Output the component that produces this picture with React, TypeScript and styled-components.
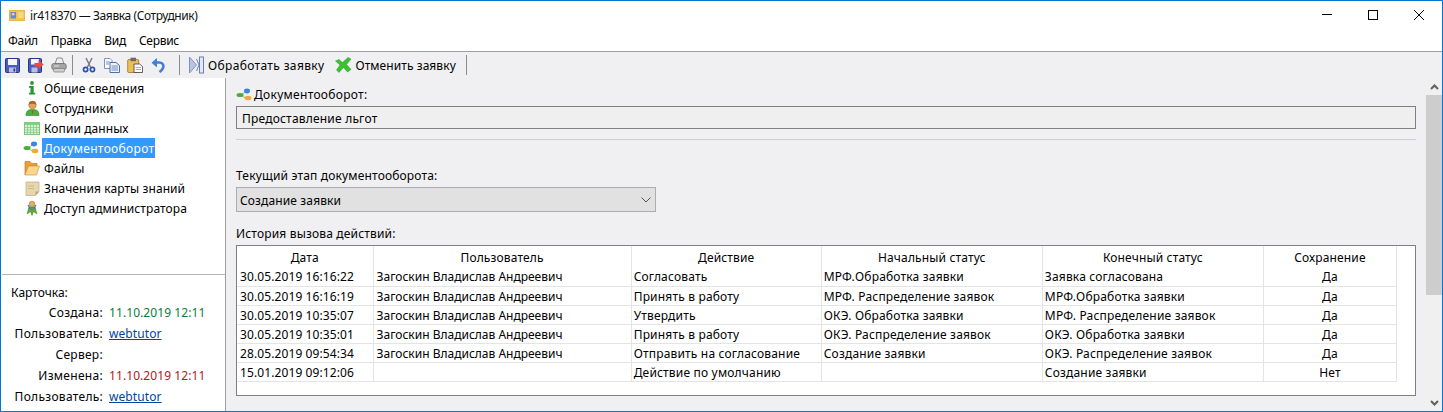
import React from 'react';
import styled, { createGlobalStyle } from 'styled-components';

const GlobalStyle = createGlobalStyle`
  html, body { margin: 0; padding: 0; background: #fff; overflow: hidden; }
  * { box-sizing: border-box; }
`;

const Window = styled.div`
  width: 1443px;
  height: 412px;
  border: 1px solid #0078d7;
  display: flex;
  flex-direction: column;
  font-family: "Noto Sans", "Open Sans", sans-serif;
  font-size: 12px;
  color: #000;
  background: #fff;
  overflow: hidden;
`;

const TitleBar = styled.div`
  height: 29px;
  flex: none;
  display: flex;
  align-items: center;
  padding-left: 8px;
  gap: 5px;
`;

const TitleText = styled.span`
  flex: 1;
  color: #111;
  letter-spacing: -0.4px;
`;

const WinButtons = styled.div`
  display: flex;
`;

const WinButton = styled.div`
  width: 46px;
  height: 29px;
  padding-bottom: 1px;
  display: flex;
  align-items: center;
  justify-content: center;
`;

const MenuBar = styled.div`
  height: 22px;
  flex: none;
  display: flex;
  align-items: center;
  padding-left: 7px;
  gap: 13px;
  border-bottom: 1px solid #a0a0a0;
  letter-spacing: -0.3px;
`;

const ToolBar = styled.div`
  height: 26px;
  flex: none;
  display: flex;
  align-items: center;
  background: #f0f0f2;
`;

const ToolIcon = styled.div<{ $gap?: number }>`
  width: 23px;
  height: 22px;
  margin-left: ${(p) => p.$gap || 0}px;
  display: flex;
  align-items: center;
  justify-content: center;
`;

const ToolSep = styled.div<{ $left: number; $right: number }>`
  width: 1px;
  height: 20px;
  background: #8c8c8c;
  margin: 0 ${(p) => p.$right}px 0 ${(p) => p.$left}px;
`;

const ToolLabel = styled.span<{ $track: number }>`
  letter-spacing: ${(p) => p.$track}px;
  white-space: nowrap;
`;

const Body = styled.div`
  flex: 1;
  display: flex;
  min-height: 0;
`;

const Sidebar = styled.div`
  width: 225px;
  flex: none;
  border-right: 1px solid #a0a0a0;
  display: flex;
  flex-direction: column;
  background: #fff;
`;

const NavList = styled.div`
  height: 196px;
  flex: none;
  padding-left: 21px;
`;

const NavItem = styled.div`
  height: 20px;
  display: flex;
  align-items: center;
`;

const NavIcon = styled.div`
  width: 20px;
  height: 20px;
  flex: none;
  display: flex;
  align-items: center;
  justify-content: center;
`;

const NavText = styled.span<{ $active?: boolean }>`
  height: 20px;
  line-height: 21px;
  padding: 0 1px 0 2px;
  letter-spacing: ${(p) => (p.$active ? 0.33 : 0.08)}px;
  background: ${(p) => (p.$active ? '#3399ff' : 'transparent')};
  color: ${(p) => (p.$active ? '#fff' : '#000')};
`;

const CardInfo = styled.div`
  flex: 1;
  margin: 0 0 0 1px;
  border-top: 1px solid #b4b4b4;
  padding: 7px 0 0 9px;
`;

const CardTitle = styled.div`
  height: 20px;
  line-height: 21px;
`;

const CardGrid = styled.div`
  display: grid;
  grid-template-columns: 92px auto;
  justify-content: start;
  column-gap: 6px;
  grid-auto-rows: 21px;
  line-height: 21px;
`;

const CardLabel = styled.div`
  text-align: right;
  white-space: nowrap;
  letter-spacing: 0.3px;
`;

const CardValue = styled.div<{ $color?: string }>`
  color: ${(p) => p.$color || '#000'};
  letter-spacing: 0.08px;
`;

const UserLink = styled.a`
  color: #0046a0;
  text-decoration: underline;
`;

const Content = styled.div`
  flex: 1;
  display: flex;
  background: #f0f0f2;
  min-width: 0;
`;

const Main = styled.div`
  flex: 1;
  padding: 7px 10px 0 10px;
  min-width: 0;
`;

const FieldLabel = styled.div`
  height: 20px;
  display: flex;
  align-items: center;
  letter-spacing: 0.17px;
`;

const DocLabel = styled(FieldLabel)`
  letter-spacing: 0.3px;
  padding-bottom: 1px;
`;

const ReadonlyBox = styled.div`
  height: 23px;
  margin-top: 1px;
  border: 1px solid #808080;
  background: #efefef;
  padding-left: 5px;
  line-height: 23px;
  letter-spacing: 0.2px;
`;

const Divider = styled.div`
  height: 1px;
  margin-top: 10px;
  background: #c4d0da;
`;

const StageLabel = styled(FieldLabel)`
  margin-top: 25px;
`;

const SelectBox = styled.div`
  width: 420px;
  height: 25px;
  margin-top: 2px;
  border: 1px solid #adadad;
  background: #e1e1e1;
  padding: 1px 4px 0 3px;
  display: flex;
  align-items: center;
  justify-content: space-between;
  letter-spacing: 0.13px;
`;

const HistoryLabel = styled(FieldLabel)`
  margin-top: 11px;
`;

const TableFrame = styled.div`
  height: 151px;
  margin-top: 2px;
  border: 1px solid #808080;
  background: #fff;
`;

const Grid = styled.table`
  border-collapse: collapse;
  table-layout: fixed;
  width: 1160px;
`;

const Head = styled.th`
  height: 21px;
  font-weight: 400;
  text-align: center;
  padding: 1px 0 0;
  letter-spacing: 0.15px;
  border-right: 1px solid #e4e4e4;
`;

const Cell = styled.td<{ $center?: boolean }>`
  height: 19px;
  padding: 2px 0 0 ${(p) => (p.$center ? 0 : 2)}px;
  text-align: ${(p) => (p.$center ? 'center' : 'left')};
  border-right: 1px solid #e4e4e4;
  border-bottom: 1px solid #e4e4e4;
  white-space: nowrap;
  overflow: hidden;
  line-height: 16px;
  letter-spacing: 0.18px;

  &:nth-child(1) {
    padding-left: 3px;
    letter-spacing: 0.1px;
  }
  &:nth-child(2) {
    padding-left: 3px;
    letter-spacing: 0;
  }
`;

const ScrollBar = styled.div`
  width: 16px;
  flex: none;
  display: flex;
  flex-direction: column;
  background: #f0f0f0;
`;

const ScrollArrow = styled.div`
  height: 17px;
  flex: none;
  display: flex;
  align-items: center;
  justify-content: center;
`;

const ScrollThumb = styled.div`
  height: 200px;
  flex: none;
  background: #cdcdcd;
`;

const ScrollTrack = styled.div`
  flex: 1;
`;

const FlowIcon = () => (
  <svg width="18" height="14" viewBox="0 0 18 14">
    <path d="M5 7 L10 3.5 M5 7 L10 10.5" stroke="#9aa8b8" strokeWidth="1" fill="none" />
    <ellipse cx="4" cy="7" rx="3.5" ry="2" fill="#45b035" />
    <ellipse cx="11" cy="3" rx="3" ry="2.4" fill="#3c86d8" />
    <ellipse cx="12" cy="10" rx="3.4" ry="2.2" fill="#eda93c" />
  </svg>
);

const ActionIcon = () => (
  <svg width="15" height="18" viewBox="0 0 15 18">
    <path d="M0.5 1 L7.5 9 L0.5 17 Z" fill="#b9c3e6" stroke="#8090c0" />
    <rect x="10.5" y="1" width="4" height="16" fill="#e4e8f6" stroke="#6d7fb0" />
    <path d="M7.5 3 L10 9 L7.5 15" fill="none" stroke="#6d7fb0" />
  </svg>
);

const CancelIcon = () => (
  <svg width="17" height="16" viewBox="0 0 17 16">
    <path d="M0.5 4 L4 2.5 L7.5 5.5 L13 0.5 L16 2 L11.5 7.5 L16 12.5 L12.5 15 L8.5 10.5 L4 15.5 L1.5 13 L5 8 Z" fill="#3cc034" stroke="#249a20" strokeWidth="0.5" />
  </svg>
);

const SaveIcon = () => (
  <svg width="15" height="15" viewBox="0 0 15 15">
    <rect x="0.5" y="0.5" width="14" height="14" rx="1" fill="#4a5cc0" stroke="#2a3480" />
    <rect x="3" y="1" width="9" height="6" fill="#f4f6ff" />
    <rect x="4" y="9.5" width="7" height="5" fill="#b9bfe0" />
    <rect x="8.5" y="10.5" width="1.6" height="3" fill="#2a3480" />
  </svg>
);

const SaveAsIcon = () => (
  <svg width="16" height="15" viewBox="0 0 16 15">
    <rect x="0.5" y="0.5" width="13" height="14" rx="1" fill="#4a5cc0" stroke="#2a3480" />
    <rect x="3" y="1" width="8" height="5.5" fill="#f4f6ff" />
    <rect x="3.5" y="9.5" width="6" height="5" fill="#b9bfe0" />
    <path d="M6.5 5 H10.5 V2 L15.7 6.5 L10.5 11 V8.5 H6.5 Z" fill="#ec4a3a" />
  </svg>
);

const PrintIcon = () => (
  <svg width="16" height="16" viewBox="0 0 16 16">
    <path d="M4 7 L6 1 H11 L13 7 Z" fill="#ececec" stroke="#777" strokeWidth="0.8" />
    <rect x="0.8" y="6.5" width="14.4" height="6" rx="2" fill="#a4a4a4" stroke="#6e6e6e" strokeWidth="0.8" />
    <rect x="2.5" y="11.5" width="11" height="3.5" rx="1.2" fill="#cfcfcf" stroke="#767676" strokeWidth="0.7" />
    <path d="M3 9 H8" stroke="#e4e4e4" />
  </svg>
);

const CutIcon = () => (
  <svg width="14" height="16" viewBox="0 0 14 16">
    <path d="M4 1 L8.5 10 M10 1 L5.5 10" stroke="#7b7b84" strokeWidth="1.5" fill="none" />
    <circle cx="3.6" cy="12.5" r="2.1" fill="none" stroke="#2d4fb0" strokeWidth="1.7" />
    <circle cx="10.4" cy="12.5" r="2.1" fill="none" stroke="#2d4fb0" strokeWidth="1.7" />
  </svg>
);

const CopyIcon = () => (
  <svg width="16" height="15" viewBox="0 0 16 15">
    <path d="M0.5 0.5 H6 L8 2.5 V10.5 H0.5 Z" fill="#fff" stroke="#7c93c4" />
    <path d="M6 4.5 H12 L15.5 7.5 V14.5 H6 Z" fill="#eef3fc" stroke="#4f6cab" />
    <path d="M7.5 8 H14 M7.5 10 H14 M7.5 12 H14 M2 4 H6 M2 6 H5" stroke="#5f7fc0" strokeWidth="0.9" />
  </svg>
);

const PasteIcon = () => (
  <svg width="16" height="16" viewBox="0 0 16 16">
    <rect x="0.7" y="2.5" width="11" height="13" rx="1" fill="#eebf55" stroke="#9a7226" strokeWidth="0.8" />
    <rect x="3.5" y="0.7" width="5.5" height="3.5" fill="#6a6a6a" />
    <path d="M7 7 H12.5 L15.5 9.5 V15.5 H7 Z" fill="#fff" stroke="#3c3c3c" strokeWidth="0.8" />
    <path d="M8.5 10.5 H14 M8.5 12.5 H14" stroke="#888" strokeWidth="0.7" />
  </svg>
);

const UndoIcon = () => (
  <svg width="14" height="15" viewBox="0 0 14 15">
    <path d="M4 4.5 H8.5 C12 4.5 13 7.5 12 10 C11.4 11.6 10 13 8.5 14" fill="none" stroke="#3f7fd6" strokeWidth="2.6" />
    <path d="M6 0 V9.5 L0.5 4.7 Z" fill="#3f7fd6" />
  </svg>
);

const InfoIcon = () => (
  <svg width="8" height="14" viewBox="0 0 8 14">
    <circle cx="4" cy="2" r="1.9" fill="#27962f" />
    <path d="M1 5 H5.7 V11.8 H7.2 V13.6 H1 V11.8 H2.5 V6.8 H1 Z" fill="#27962f" />
  </svg>
);

const PersonIcon = () => (
  <svg width="15" height="16" viewBox="0 0 15 16">
    <path d="M1 15.5 C1 11 3 9.5 7.5 9.5 C12 9.5 14 11 14 15.5 Z" fill="#4caf3c" stroke="#2c8a25" strokeWidth="0.6" />
    <circle cx="7.5" cy="5" r="3.8" fill="#e0a45c" stroke="#b5742c" strokeWidth="0.6" />
    <path d="M3.8 4.5 C4 1.5 6 1 7.5 1 C9.5 1 11 2 11.2 4.5 C9 3.5 6 3.5 3.8 4.5 Z" fill="#a66a26" />
    <path d="M7.5 10 L6.8 11 L7.5 14.5 L8.2 11 Z" fill="#d8342c" />
  </svg>
);

const TableIcon = () => (
  <svg width="16" height="13" viewBox="0 0 16 13">
    <rect x="0.5" y="0.5" width="15" height="12" fill="#d8f2d4" stroke="#7cc87c" />
    <rect x="0.5" y="0.5" width="15" height="2.5" fill="#7fd07f" />
    <path d="M3.5 3 V13 M6.5 3 V13 M9.5 3 V13 M12.5 3 V13 M1 5.5 H15 M1 8 H15 M1 10.5 H15" stroke="#7cc87c" strokeWidth="0.7" />
  </svg>
);

const FolderIcon = () => (
  <svg width="16" height="16" viewBox="0 0 16 16">
    <path d="M1 15 V1.5 H6 L7.5 3.5 H13 V6 H4.5 Z" fill="#ea9f32" stroke="#c07c1c" strokeWidth="0.7" />
    <path d="M1 15 L4.5 6 H15.5 L12.5 15 Z" fill="#fbd690" stroke="#da9a34" strokeWidth="0.7" />
  </svg>
);

const NoteIcon = () => (
  <svg width="15" height="15" viewBox="0 0 15 15">
    <path d="M1 1 H14 V10.5 L10.5 14.5 H1 Z" fill="#e6d6ae" stroke="#c4b48a" strokeWidth="0.8" />
    <path d="M10.5 14.5 V10.5 H14 Z" fill="#b9a678" />
    <path d="M3 5 H9 M3 7.5 H9" stroke="#c6b27e" strokeWidth="0.8" />
  </svg>
);

const AdminIcon = () => (
  <svg width="14" height="16" viewBox="0 0 14 16">
    <path d="M2 14 L4 7 H10 L12 14 L8.5 11.5 L7 15.5 L5.5 11.5 Z" fill="#4caf3c" stroke="#2c8a25" strokeWidth="0.5" />
    <circle cx="7" cy="4" r="2.8" fill="#e2b060" stroke="#a9752c" strokeWidth="0.6" />
    <path d="M3 5 L6 10 M11 5 L8 10" stroke="#3d6fc4" strokeWidth="1.2" />
    <path d="M5 9 L7 12 L9 9" fill="none" stroke="#d8742c" strokeWidth="1" />
  </svg>
);

const CardGlyph = () => (
  <svg width="16" height="11" viewBox="0 0 16 11">
    <rect x="0" y="0" width="16" height="11" rx="1" fill="#f6c24e" stroke="#dc9e25" strokeWidth="0.6" />
    <rect x="1.5" y="2" width="5.5" height="6.5" fill="#5f8ed0" />
    <circle cx="4.2" cy="4.2" r="1.4" fill="#f0c9a0" />
    <path d="M9 3 H14.5 M9 5 H14.5 M9 7 H14.5" stroke="#fbe9b8" strokeWidth="1" />
  </svg>
);

const Chevron = ({ up }: { up?: boolean }) => (
  <svg width="9" height="6" viewBox="0 0 9 6">
    <path d={up ? 'M1 5 L4.5 1.5 L8 5' : 'M1 1 L4.5 4.5 L8 1'} fill="none" stroke="#606060" strokeWidth="2" />
  </svg>
);

const navItems: { label: string; icon: React.ReactNode; active?: boolean }[] = [
  { label: 'Общие сведения', icon: <InfoIcon /> },
  { label: 'Сотрудники', icon: <PersonIcon /> },
  { label: 'Копии данных', icon: <TableIcon /> },
  { label: 'Документооборот', icon: <FlowIcon />, active: true },
  { label: 'Файлы', icon: <FolderIcon /> },
  { label: 'Значения карты знаний', icon: <NoteIcon /> },
  { label: 'Доступ администратора', icon: <AdminIcon /> },
];

const user = 'Загоскин Владислав Андреевич';

const rows = [
  ['30.05.2019 16:16:22', user, 'Согласовать', 'МРФ.Обработка заявки', 'Заявка согласована', 'Да'],
  ['30.05.2019 16:16:19', user, 'Принять в работу', 'МРФ. Распределение заявок', 'МРФ.Обработка заявки', 'Да'],
  ['30.05.2019 10:35:07', user, 'Утвердить', 'ОКЭ. Обработка заявки', 'МРФ. Распределение заявок', 'Да'],
  ['30.05.2019 10:35:01', user, 'Принять в работу', 'ОКЭ. Распределение заявок', 'ОКЭ. Обработка заявки', 'Да'],
  ['28.05.2019 09:54:34', user, 'Отправить на согласование', 'Создание заявки', 'ОКЭ. Распределение заявок', 'Да'],
  ['15.01.2019 09:12:06', '', 'Действие по умолчанию', '', 'Создание заявки', 'Нет'],
];

const columns = [
  { title: 'Дата', width: 136 },
  { title: 'Пользователь', width: 258 },
  { title: 'Действие', width: 190 },
  { title: 'Начальный статус', width: 221 },
  { title: 'Конечный статус', width: 221 },
  { title: 'Сохранение', width: 133 },
];

export default function App() {
  return (
    <>
      <GlobalStyle />
      <Window>
        <TitleBar>
          <CardGlyph />
          <TitleText>ir418370 — Заявка (Сотрудник)</TitleText>
          <WinButtons>
            <WinButton>
              <svg width="10" height="10" viewBox="0 0 10 10"><path d="M0 4.5 H10" stroke="#000" /></svg>
            </WinButton>
            <WinButton>
              <svg width="10" height="10" viewBox="0 0 10 10"><rect x="0.5" y="0.5" width="9" height="9" fill="none" stroke="#000" /></svg>
            </WinButton>
            <WinButton>
              <svg width="10" height="10" viewBox="0 0 10 10"><path d="M0 0 L10 10 M10 0 L0 10" stroke="#000" /></svg>
            </WinButton>
          </WinButtons>
        </TitleBar>
        <MenuBar>
          <span>Файл</span>
          <span>Правка</span>
          <span>Вид</span>
          <span>Сервис</span>
        </MenuBar>
        <ToolBar>
          <ToolIcon><SaveIcon /></ToolIcon>
          <ToolIcon><SaveAsIcon /></ToolIcon>
          <ToolIcon><PrintIcon /></ToolIcon>
          <ToolSep $left={2} $right={4} />
          <ToolIcon><CutIcon /></ToolIcon>
          <ToolIcon><CopyIcon /></ToolIcon>
          <ToolIcon><PasteIcon /></ToolIcon>
          <ToolIcon><UndoIcon /></ToolIcon>
          <ToolSep $left={10} $right={5} />
          <ToolIcon><ActionIcon /></ToolIcon>
          <ToolLabel $track={0.35}>Обработать заявку</ToolLabel>
          <ToolIcon $gap={8}><CancelIcon /></ToolIcon>
          <ToolLabel $track={0.07}>Отменить заявку</ToolLabel>
          <ToolSep $left={10} $right={0} />
        </ToolBar>
        <Body>
          <Sidebar>
            <NavList>
              {navItems.map((item) => (
                <NavItem key={item.label}>
                  <NavIcon>{item.icon}</NavIcon>
                  <NavText $active={item.active}>{item.label}</NavText>
                </NavItem>
              ))}
            </NavList>
            <CardInfo>
              <CardTitle>Карточка:</CardTitle>
              <CardGrid>
                <CardLabel>Создана:</CardLabel>
                <CardValue $color="#0a7d3c">11.10.2019 12:11</CardValue>
                <CardLabel>Пользователь:</CardLabel>
                <CardValue><UserLink>webtutor</UserLink></CardValue>
                <CardLabel>Сервер:</CardLabel>
                <CardValue />
                <CardLabel>Изменена:</CardLabel>
                <CardValue $color="#b02020">11.10.2019 12:11</CardValue>
                <CardLabel>Пользователь:</CardLabel>
                <CardValue><UserLink>webtutor</UserLink></CardValue>
              </CardGrid>
            </CardInfo>
          </Sidebar>
          <Content>
            <Main>
              <DocLabel><FlowIcon />Документооборот:</DocLabel>
              <ReadonlyBox>Предоставление льгот</ReadonlyBox>
              <Divider />
              <StageLabel>Текущий этап документооборота:</StageLabel>
              <SelectBox>
                Создание заявки
                <svg width="10" height="6" viewBox="0 0 10 6"><path d="M0.5 0.5 L5 5 L9.5 0.5" fill="none" stroke="#555" /></svg>
              </SelectBox>
              <HistoryLabel>История вызова действий:</HistoryLabel>
              <TableFrame>
                <Grid>
                  <colgroup>
                    {columns.map((c) => <col key={c.title} width={c.width} />)}
                  </colgroup>
                  <thead>
                    <tr>{columns.map((c) => <Head key={c.title}>{c.title}</Head>)}</tr>
                  </thead>
                  <tbody>
                    {rows.map((r) => (
                      <tr key={r[0]}>
                        {r.map((v, i) => <Cell key={i} $center={i === 5}>{v}</Cell>)}
                      </tr>
                    ))}
                  </tbody>
                </Grid>
              </TableFrame>
            </Main>
            <ScrollBar>
              <ScrollArrow><Chevron up /></ScrollArrow>
              <ScrollThumb />
              <ScrollTrack />
              <ScrollArrow><Chevron /></ScrollArrow>
            </ScrollBar>
          </Content>
        </Body>
      </Window>
    </>
  );
}
